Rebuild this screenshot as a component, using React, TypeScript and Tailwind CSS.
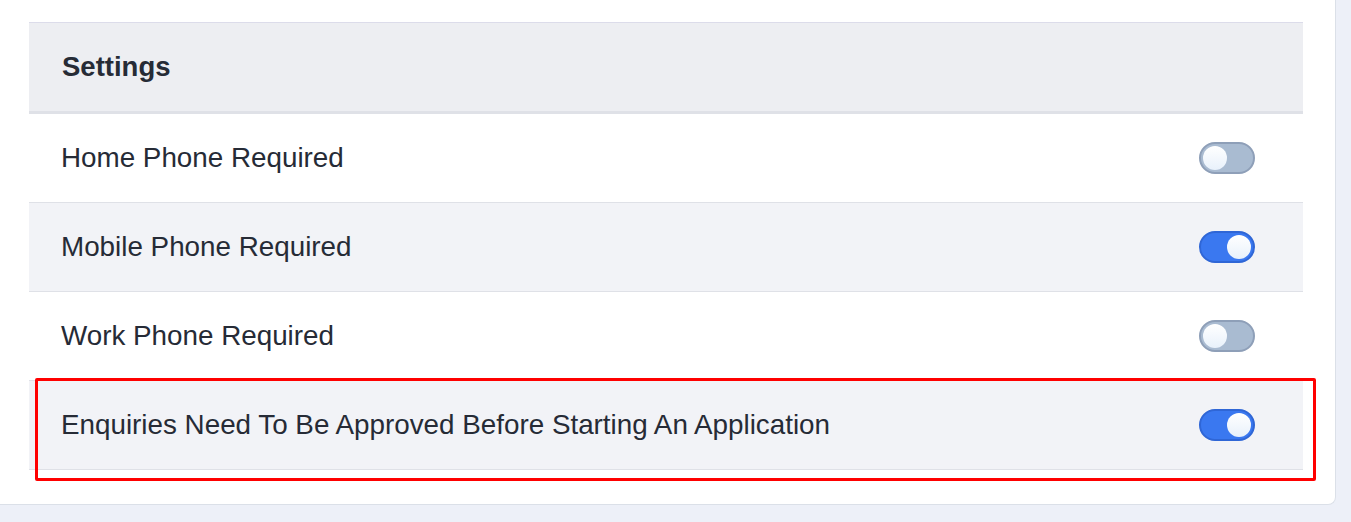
import { useState } from "react";

type Setting = { label: string; on: boolean };

const INITIAL: Setting[] = [
  { label: "Home Phone Required", on: false },
  { label: "Mobile Phone Required", on: true },
  { label: "Work Phone Required", on: false },
  { label: "Enquiries Need To Be Approved Before Starting An Application", on: true },
];

function Toggle({ on, onChange }: { on: boolean; onChange: () => void }) {
  return (
    <button
      type="button"
      role="switch"
      aria-checked={on}
      onClick={onChange}
      className={[
        "relative flex h-[32px] w-[56px] shrink-0 items-center rounded-full border-2 px-[2px]",
        on ? "justify-end border-[#2f66d6] bg-[#3a78f0]" : "justify-start border-[#8e9fb8] bg-[#a9bbd1]",
      ].join(" ")}
    >
      <span className="block h-[24px] w-[24px] rounded-full bg-gradient-to-b from-white to-[#e8f1fb]" />
    </button>
  );
}

export default function App() {
  const [settings, setSettings] = useState(INITIAL);

  const flip = (i: number) =>
    setSettings((prev) => prev.map((s, j) => (j === i ? { ...s, on: !s.on } : s)));

  return (
    <div
      className="min-h-[522px] w-full bg-[#edf0f8] text-[#262b36]"
      style={{ fontFamily: '"Liberation Sans", Arial, sans-serif' }}
    >
      <div className="relative w-[1336px] rounded-br-lg border-r border-b border-[#dbe0e8] bg-white pt-[22px] pr-[32px] pb-[34px] pl-[29px]">
        <div className="border-t border-[#dcdcea]">
          {/* Header */}
          <div className="flex h-[91px] items-center border-b-[3px] border-[#dfe1e7] bg-[#edeef2] px-[33px]">
            <h2 className="text-[27.5px] font-bold">Settings</h2>
          </div>

          {settings.map((s, i) => (
            <div
              key={s.label}
              className={[
                "flex h-[89px] items-center justify-between border-b border-[#dfe1e7] pr-[48px] pl-[32px]",
                i % 2 === 1 ? "bg-[#f2f3f7]" : "bg-white",
              ].join(" ")}
            >
              <span className="text-[27.8px]">{s.label}</span>
              <Toggle on={s.on} onChange={() => flip(i)} />
            </div>
          ))}
        </div>

        {/* Highlight box over last row */}
        <div className="pointer-events-none absolute top-[378px] left-[35px] h-[103px] w-[1281px] rounded-[2px] border-[3px] border-[#ff0000]" />
      </div>
    </div>
  );
}
